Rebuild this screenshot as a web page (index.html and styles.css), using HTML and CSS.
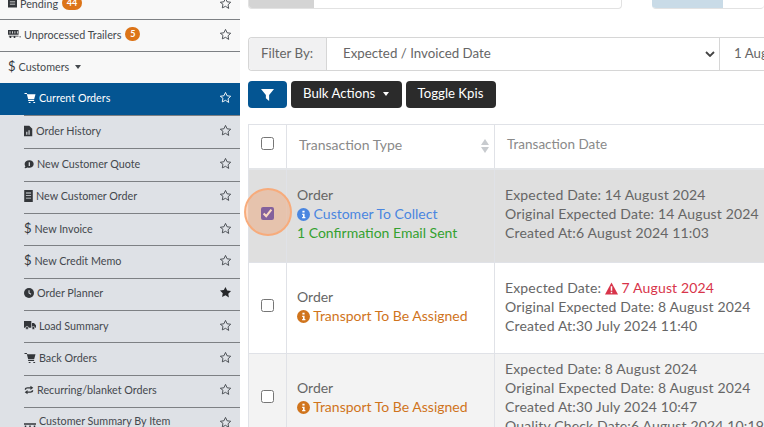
FILE: index.html
```html
<!DOCTYPE html>
<html lang="en">
<head>
<meta charset="utf-8">
<title>Current Orders</title>
<link rel="stylesheet" href="styles.css">
</head>
<body>
<svg class="defs" width="0" height="0" aria-hidden="true">
  <defs>
    <symbol id="star" viewBox="0 0 24 24"><path d="M12 2.600l2.900 6.200 6.700.9-4.900 4.700 1.200 6.700L12 17.200 6.100 20.100l1.200-6.700L2.400 9.700l6.700-.9z" fill="none" stroke="currentColor" stroke-width="1.700" stroke-linejoin="round"/></symbol>
    <symbol id="star-solid" viewBox="0 0 24 24"><path d="M12 1.800l3.100 6.500 7.100 1-5.100 5 1.200 7.100L12 17l-6.300 3.400 1.200-7.100-5.100-5 7.100-1z" fill="currentColor"/></symbol>
    <symbol id="cart" viewBox="0 0 24 24"><path d="M0 2h5l1 3h18l-3 11H8L5 4.500H0zM8 17.500h13v2H8z M9 24a2.200 2.200 0 1 0 0-.01zM19 24a2.200 2.200 0 1 0 0-.01z" fill="currentColor"/></symbol>
    <symbol id="info" viewBox="0 0 24 24"><circle cx="12" cy="12" r="12" fill="currentColor"/><path d="M10 5h4v3.500h-4zM9.500 10.500h4.500v6h1.500v2.500h-6v-2.500H11v-3.500H9.500z" fill="#fff"/></symbol>
  </defs>
</svg>
<div class="page">
  <aside class="sidebar">
    <div class="item item-cut"><span class="label"><svg class="ico" viewBox="0 0 12 14"><path d="M0 1h12v12H0z" fill="currentColor"/><path d="M2.500 5h7v1h-7zM2.500 8h7v1h-7z" fill="#f8f8f8"/></svg> Pending <b class="badge badge-wide">44</b></span><svg class="star"><use href="#star"/></svg></div>
    <div class="item"><span class="label"><svg class="ico ico-w" viewBox="0 0 16 12"><path d="M0 1h13v6H0zM1 8h12v1H9v2H7V9H4v2H2V9H1zM14 9h2v1h-2z" fill="currentColor"/><path d="M2 2.500h1v3H2zM5 2.500h1v3H5zM8 2.500h1v3H8zM11 2.500h1v3h-1z" fill="#f8f8f8"/></svg> Unprocessed Trailers <b class="badge">5</b></span><svg class="star"><use href="#star"/></svg></div>
    <div class="item item-head"><span class="label"><span class="dollar">$</span> Customers <i class="caret"></i></span></div>
    <div class="sub">
      <div class="item active"><span class="label"><svg class="ico ico-c"><use href="#cart"/></svg> Current Orders</span><svg class="star"><use href="#star"/></svg></div>
      <div class="item"><span class="label"><svg class="ico" viewBox="0 0 12 14"><path d="M0 0h7l4 4v10H0z" fill="currentColor"/><path d="M3 8h1.500v4H3zM6 6h1.500v6H6z" fill="#dee1e6"/></svg> Order History</span><svg class="star"><use href="#star"/></svg></div>
      <div class="item"><span class="label"><svg class="ico ico-m" viewBox="0 0 16 14"><path d="M8.500 1c4 0 7 2.500 7 6s-3 6-7 6c-1 0-2-.1-3-.5C4 13.500 2 14 .5 13.500 1.500 12.500 2 11.500 2.200 10.500 1.400 9.500 1 8.300 1 7c0-3.500 3.500-6 7.500-6z" fill="currentColor"/><path d="M7.500 4h2v6h-2z" fill="#dee1e6"/></svg> New Customer Quote</span><svg class="star"><use href="#star"/></svg></div>
      <div class="item"><span class="label"><svg class="ico" viewBox="0 0 10 14"><path d="M0 0h10v14H0z" fill="currentColor"/><path d="M2 3h6v1H2zM2 6h6v1H2zM2 9h6v1H2z" fill="#dee1e6"/></svg> New Customer Order</span><svg class="star"><use href="#star"/></svg></div>
      <div class="item"><span class="label"><span class="dollar">$</span> New Invoice</span><svg class="star"><use href="#star"/></svg></div>
      <div class="item"><span class="label"><span class="dollar">$</span> New Credit Memo</span><svg class="star"><use href="#star"/></svg></div>
      <div class="item"><span class="label"><svg class="ico ico-m" viewBox="0 0 14 14"><circle cx="7" cy="7" r="7" fill="currentColor"/><path d="M6.300 3h1.400v3.600l2.500 1.500-.7 1.200L6.300 7.400z" fill="#dee1e6"/></svg> Order Planner</span><svg class="star star-on"><use href="#star-solid"/></svg></div>
      <div class="item"><span class="label"><svg class="ico ico-t" viewBox="0 0 18 14"><path d="M0 1h11v10H0zM12 4h3l3 3.500V11h-6z" fill="currentColor"/><circle cx="4.500" cy="11.500" r="2.300" fill="currentColor" stroke="#dee1e6"/><circle cx="14" cy="11.500" r="2.300" fill="currentColor" stroke="#dee1e6"/></svg> Load Summary</span><svg class="star"><use href="#star"/></svg></div>
      <div class="item"><span class="label"><svg class="ico ico-c"><use href="#cart"/></svg> Back Orders</span><svg class="star"><use href="#star"/></svg></div>
      <div class="item"><span class="label"><svg class="ico ico-m" viewBox="0 0 14 14"><path d="M1 6.500C1 4 3 3 5 3h4V1l4 3-4 3V5H5C3.800 5 3 5.500 3 6.500zM13 7.500C13 10 11 11 9 11H5v2L1 10l4-3v2h4c1.200 0 2-.5 2-1.500z" fill="currentColor"/></svg> Recurring/blanket Orders</span><svg class="star"><use href="#star"/></svg></div>
      <div class="item"><span class="label label-raised"><svg class="ico ico-t ico-low" viewBox="0 0 16 6"><path d="M0 0h16v2H0zM1 3h2v3H1zM7 3h2v3H7zM13 3h2v3h-2z" fill="currentColor"/></svg> Customer Summary By Item</span><svg class="star"><use href="#star"/></svg></div>
    </div>
  </aside>
  <main class="main">
    <div class="cards">
      <div class="card card-grey"><span class="fill"></span></div>
      <div class="card card-blue"><span class="fill"></span></div>
    </div>
    <div class="filter">
      <span class="filter-label">Filter By:</span>
      <span class="filter-select">Expected / Invoiced Date<svg class="chev" viewBox="0 0 10 6"><path d="M1 1l4 4 4-4" fill="none" stroke="currentColor" stroke-width="1.800"/></svg></span>
      <span class="filter-date">1 August 2024</span>
    </div>
    <div class="actions">
      <button class="btn btn-blue" type="button" aria-label="Filter"><svg class="funnel" viewBox="0 0 12 11"><path d="M0 0h12L7.500 5.500V11L4.500 8.500v-3z" fill="currentColor"/></svg></button>
      <button class="btn btn-dark" type="button"><span class="btn-text">Bulk Actions <i class="caret caret-w"></i></span></button>
      <button class="btn btn-dark" type="button"><span class="btn-text">Toggle Kpis</span></button>
    </div>
    <table class="table">
      <thead>
        <tr>
          <th class="c-check"><input class="check" type="checkbox"></th>
          <th class="c-type"><span class="th-wrap">Transaction Type<span class="sort"></span></span></th>
          <th class="c-date">Transaction Date</th>
        </tr>
      </thead>
      <tbody>
        <tr class="row row-1 selected">
          <td class="c-check"><input class="check" type="checkbox" checked></td>
          <td class="cell">Order<br><span class="blue"><svg class="st"><use href="#info"/></svg> Customer To Collect</span><br><span class="green">1 Confirmation Email Sent</span></td>
          <td class="cell dates">Expected Date: 14 August 2024<br>Original Expected Date: 14 August 2024<br>Created At:6 August 2024 11:03</td>
        </tr>
        <tr class="row row-2">
          <td class="c-check"><input class="check" type="checkbox"></td>
          <td class="cell">Order<br><span class="orange"><svg class="st"><use href="#info"/></svg> Transport To Be Assigned</span></td>
          <td class="cell dates">Expected Date: <span class="red"><svg class="st" viewBox="0 0 14 13"><path d="M7 0l7 13H0z" fill="currentColor"/><path d="M6.200 4h1.600v5H6.200zM6.200 10h1.600v1.500H6.200z" fill="#fff"/></svg> 7 August 2024</span><br>Original Expected Date: 8 August 2024<br>Created At:30 July 2024 11:40</td>
        </tr>
        <tr class="row row-3">
          <td class="c-check"><input class="check" type="checkbox"></td>
          <td class="cell">Order<br><span class="orange"><svg class="st"><use href="#info"/></svg> Transport To Be Assigned</span></td>
          <td class="cell dates">Expected Date: 8 August 2024<br>Original Expected Date: 8 August 2024<br>Created At:30 July 2024 10:47<br>Quality Check Date:6 August 2024 10:19</td>
        </tr>
      </tbody>
    </table>
  </main>
  <div class="spot"></div>
</div>
</body>
</html>
```
FILE: styles.css
```css
* { box-sizing: border-box; }
html, body { margin: 0; padding: 0; }
body {
  width: 764px;
  height: 427px;
  overflow: hidden;
  background: #fff;
  color: #666;
  font-family: "Lato", "Liberation Sans", sans-serif;
  font-size: 14px;
}
.defs { position: absolute; }
.page {
  position: relative;
  display: flex;
  gap: 8px;
  width: 764px;
  height: 427px;
  overflow: hidden;
}
.sidebar {
  flex: 0 0 240px;
  height: 427px;
  overflow: hidden;
  background: #f8f8f8;
  color: #44484d;
  font-size: 10.75px;
}
.item {
  display: flex;
  align-items: center;
  justify-content: space-between;
  height: 32.35px;
  padding: 0 8px 3px 8px;
  border-bottom: 1px solid #7d8084;
}
.item-cut { height: 20px; align-items: flex-end; padding-bottom: 9px; }
.item-head { height: 31px; border-bottom: 0; padding-bottom: 2px; }
.label { display: flex; align-items: center; gap: 3px; white-space: nowrap; }
.label-raised { margin-top: -3px; }
.dollar { font-size: 13px; line-height: 1; color: #33363a; }
.star { width: 13px; height: 13px; color: #44484d; flex: none; }
.star-on { color: #26282b; }
.ico { width: 9px; height: 12px; color: #33363a; flex: none; }
.ico-w { width: 13px; }
.ico-c { width: 12px; height: 11px; }
.ico-m { width: 10px; height: 10px; }
.ico-t { width: 12px; height: 10px; }
.ico-low { height: 5px; margin-top: 9px; }
.badge {
  min-width: 15px;
  height: 14px;
  padding: 0 4px;
  margin-left: 1px;
  border-radius: 7px;
  background: #dc7418;
  color: #fff;
  font-size: 9px;
  font-weight: 700;
  line-height: 14px;
  text-align: center;
}
.badge-wide { min-width: 20px; }
.caret {
  display: inline-block;
  width: 0;
  height: 0;
  margin-left: 3px;
  border-top: 4px solid currentColor;
  border-left: 3.500px solid transparent;
  border-right: 3.500px solid transparent;
}
.sub { padding-left: 24px; background: #dee1e6; }
.sub .item { padding-left: 0; }
.sub .active {
  height: 32px;
  margin-left: -24px;
  padding-left: 24px;
  background: #045592;
  color: #fff;
  border-bottom: 0;
  font-size: 10.75px;
}
.sub .active + .item { height: 34px; border-top: 1px solid #7d8084; }
.sub .active .ico, .sub .active .star { color: #fff; }
.main { flex: 1; min-width: 0; overflow: hidden; }
.cards { display: flex; justify-content: space-between; height: 9px; margin-bottom: 28px; }
.card {
  height: 9px;
  border: 1px solid #e2e2e2;
  border-top: 0;
  border-radius: 0 0 4px 4px;
  overflow: hidden;
}
.card-grey { width: 374px; }
.card-grey .fill { display: block; width: 65px; height: 8px; background: #d4d4d4; }
.card-blue { width: 112px; border-right: 0; border-left: 0; }
.card-blue .fill { display: block; width: 71px; height: 8px; background: #c9dbe7; }
.filter {
  display: flex;
  width: 560px;
  height: 34px;
  border: 1px solid #d6d6d6;
  border-right: 0;
  border-radius: 4px 0 0 4px;
  font-size: 13.3px;
  line-height: 30px;
  white-space: nowrap;
}
.filter-label {
  flex: 0 0 78px;
  padding-left: 12px;
  background: #f1f1f2;
  border-right: 1px solid #d6d6d6;
  border-radius: 4px 0 0 4px;
}
.filter-select {
  position: relative;
  flex: 0 0 393px;
  padding-left: 16px;
  border-right: 1px solid #d6d6d6;
}
.filter-date { padding-left: 14px; }
.chev { position: absolute; right: 4px; top: 13px; width: 10px; height: 6px; color: #444; }
.actions { display: flex; gap: 4px; margin-top: 10px; margin-bottom: 16px; }
.btn {
  height: 27px;
  padding: 0 13px 3px 12px;
  border: 0;
  border-radius: 4px;
  font: inherit;
  font-size: 13.2px;
  color: #fff;
}
.btn-blue { width: 39px; background: #045592; padding: 0; }
.btn-dark { background: #2b2b2b; }
.funnel { display: block; margin: 0 auto; width: 13px; height: 12px; color: #fff; }
.caret-w { margin-left: 4px; vertical-align: 2px; }
.table {
  width: 620px;
  border-collapse: collapse;
  table-layout: fixed;
}
.table th, .table td {
  border: 1px solid #e0e2e7;
  padding: 0 10px;
  line-height: 19px;
  text-align: left;
  white-space: nowrap;
  font-weight: 400;
  vertical-align: middle;
}
.table th { height: 44px; color: #8a8a8a; padding: 0 0 3px 12px; border-bottom: 2px solid #e3e5e8; }
.table th.c-date { width: 374px; font-size: 13.5px; }
.table .c-check { width: 38px; padding: 0 0 9px; text-align: center; }
.table .c-type { width: 208px; }
.table .cell { padding-bottom: 4px; }
.dates { letter-spacing: .15px; }
.th-wrap { display: flex; justify-content: space-between; align-items: center; padding-right: 5px; }
.sort { position: relative; width: 8px; height: 14px; margin-top: 3px; }
.sort::before, .sort::after {
  content: "";
  position: absolute;
  left: 0;
  width: 0;
  height: 0;
  border-left: 4px solid transparent;
  border-right: 4px solid transparent;
}
.sort::before { top: 0; border-bottom: 6px solid #c8cbcf; }
.sort::after { bottom: 0; border-top: 6px solid #c8cbcf; }
.check { width: 13px; height: 13px; margin: 0; accent-color: #4849c5; vertical-align: middle; }
.row-1 { height: 94px; }
.row-2 { height: 91px; }
.row-3 { height: 91px; }
.row-1 td { background: #dfdfdf; }
.row-3 td { background: #f3f3f3; }
.blue { color: #4a86e0; }
.green { color: #34a12f; }
.orange { color: #d0741c; }
.red { color: #d8344a; }
.st { width: 13px; height: 13px; vertical-align: -2px; }
.spot {
  position: absolute;
  left: 244px;
  top: 188px;
  width: 48px;
  height: 48px;
  border-radius: 50%;
  background: rgba(244, 142, 80, 0.35);
  border: 2px solid rgba(248, 170, 120, 0.95);
}
```
